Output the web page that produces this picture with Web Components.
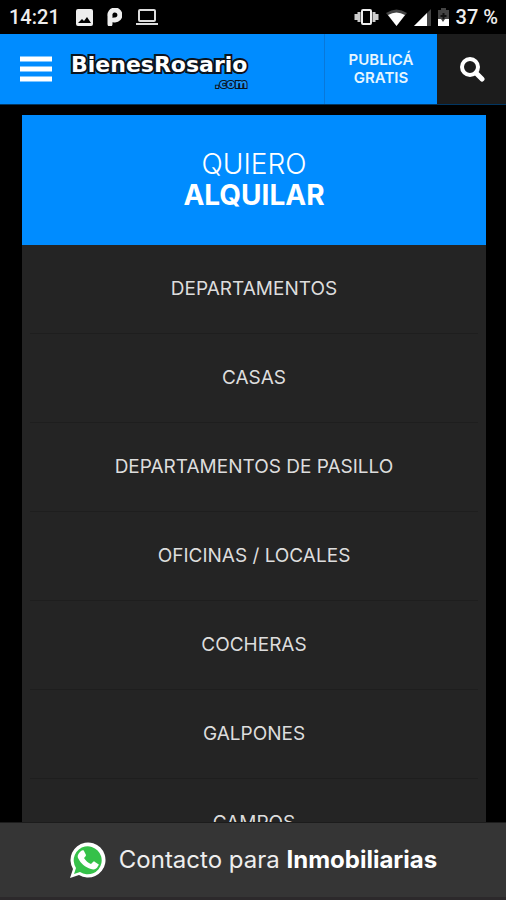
<!DOCTYPE html>
<html lang="es">
<head>
<meta charset="utf-8">
<meta name="viewport" content="width=device-width, initial-scale=1">
<title>BienesRosario.com</title>
<style>
  body {
    margin: 0;
    background: #000;
    color: #fff;
    font-family: Inter, "Liberation Sans", sans-serif;
  }
</style>
</head>
<body>
<app-shell>
  <status-bar slot="top" time="14:21" battery="37 %"></status-bar>
  <site-header slot="top">
    <site-logo slot="logo"></site-logo>
    <span slot="publish">PUBLICÁ<br>GRATIS</span>
  </site-header>
  <category-menu>
    <span slot="lead">QUIERO</span>
    <span slot="action">ALQUILAR</span>
    <category-item href="#departamentos">DEPARTAMENTOS</category-item>
    <category-item href="#casas">CASAS</category-item>
    <category-item href="#pasillo">DEPARTAMENTOS DE PASILLO</category-item>
    <category-item href="#oficinas">OFICINAS / LOCALES</category-item>
    <category-item href="#cocheras">COCHERAS</category-item>
    <category-item href="#galpones">GALPONES</category-item>
    <category-item href="#campos">CAMPOS</category-item>
  </category-menu>
  <contact-bar slot="bottom">Contacto para <b>Inmobiliarias</b></contact-bar>
</app-shell>

<script>
// Base class: clones the static template of each component into its shadow root
class BaseElement extends HTMLElement {
  constructor() {
    super();
    this.attachShadow({ mode: 'open' });
    let template = document.createElement('template');
    template.innerHTML = this.constructor.markup;
    this.shadowRoot.append(template.content.cloneNode(true));
  }
}

class AppShell extends BaseElement {}
AppShell.markup = `
  <style>
    :host {
      display: flex;
      flex-direction: column;
      height: 100vh;
    }
    main {
      flex: 1;
      min-height: 0;
      overflow-y: auto;
      scrollbar-width: none;
      padding: 10px 20px 0 22px;
    }
  </style>
  <slot name="top"></slot>
  <main><slot></slot></main>
  <slot name="bottom"></slot>
`;
customElements.define('app-shell', AppShell);

class StatusBar extends BaseElement {
  connectedCallback() {
    this.shadowRoot.querySelector('#time').textContent = this.getAttribute('time');
    this.shadowRoot.querySelector('#battery').textContent = this.getAttribute('battery');
  }
}
StatusBar.markup = `
  <style>
    :host {
      display: flex;
      align-items: center;
      height: 34px;
      padding: 0 8px 0 9px;
      background: #000;
      color: #eee;
      font: 500 20px/24px Roboto, sans-serif;
    }
    div {
      display: flex;
      align-items: center;
    }
    svg { display: block; }
    .left { gap: 14px; }
    #time { margin-right: 2px; }
    .right {
      gap: 7px;
      margin-left: auto;
    }
  </style>
  <div class="left">
    <span id="time"></span>
    <svg width="17" height="17" viewBox="0 0 17 17">
      <path fill="#eee" fill-rule="evenodd" d="M2 0h13a2 2 0 0 1 2 2v13a2 2 0 0 1-2 2H2a2 2 0 0 1-2-2V2a2 2 0 0 1 2-2zM2 14h13l-4-6-3 4-2-2z"/>
    </svg>
    <svg width="15" height="18" viewBox="0 0 15 18">
      <path d="M3 16V8a5 5 0 1 1 5 4H7" fill="none" stroke="#eee" stroke-width="5" stroke-linecap="round"/>
      <path d="M7 6v3" stroke="#000" stroke-width="2"/>
    </svg>
    <svg width="22" height="17" viewBox="0 0 22 17">
      <rect x="3" y="1" width="16" height="11" rx="1" fill="none" stroke="#ddd" stroke-width="2"/>
      <path d="M0 14h22v2H0z" fill="#ddd"/>
    </svg>
  </div>
  <div class="right">
    <svg width="25" height="18" viewBox="0 0 25 18">
      <rect x="8" y="2" width="9" height="14" rx="1" fill="none" stroke="#eee" stroke-width="2"/>
      <path d="M5 4v10M2 6v6M20 4v10M23 6v6" stroke="#ccc" stroke-width="3"/>
    </svg>
    <svg width="21" height="17" viewBox="0 0 21 17">
      <path d="M0 4Q10.500-3 21 4L10.500 17z" fill="#444"/>
      <path d="M2 6Q10.500 1 19 6L10.500 17z" fill="#fff"/>
    </svg>
    <svg width="17" height="17" viewBox="0 0 17 17">
      <path d="M0 17L17 0v17z" fill="#444"/>
      <path d="M0 17L13 4v13z" fill="#fff"/>
    </svg>
    <svg width="11" height="18" viewBox="0 0 11 18">
      <path d="M3 0h5v2h3v16H0V2h3z" fill="#444"/>
      <path d="M5.500 5v6M2.500 8h6" stroke="#111" stroke-width="2"/>
      <path d="M0 11h3l2 3 2-3h4v7H0z" fill="#fff"/>
    </svg>
    <span id="battery"></span>
  </div>
`;
customElements.define('status-bar', StatusBar);

class SiteLogo extends BaseElement {}
SiteLogo.markup = `
  <style>
    :host { display: block; }
    a {
      display: flex;
      flex-direction: column;
      align-items: flex-end;
      padding-top: 4px;
      color: #fff;
      text-decoration: none;
      font-family: "DejaVu Sans", sans-serif;
      font-weight: 700;
      -webkit-text-stroke: 4px #0a1420;
      paint-order: stroke fill;
    }
    .name { font-size: 22px; line-height: 26px; }
    .tld {
      color: #1c93f5;
      font-size: 12px;
      line-height: 12px;
      -webkit-text-stroke-width: 2px;
    }
  </style>
  <a href="#inicio"><span class="name">BienesRosario</span><span class="tld">.com</span></a>
`;
customElements.define('site-logo', SiteLogo);

class SiteHeader extends BaseElement {}
SiteHeader.markup = `
  <style>
    :host {
      display: flex;
      height: 70px;
      border-bottom: 1px solid #023661;
      background: #008cff;
    }
    button {
      display: flex;
      align-items: center;
      justify-content: center;
      padding: 0;
      border: 0;
      background: none;
    }
    .menu { width: 71px; }
    .search {
      width: 69px;
      background: #1c1c1c;
    }
    .logo {
      flex: 1;
      display: flex;
      align-items: center;
    }
    .publish {
      display: flex;
      align-items: center;
      justify-content: center;
      width: 112px;
      border-left: 1px solid #0878da;
      color: #e6f6ff;
      font-size: 15px;
      line-height: 18px;
      font-weight: 600;
      text-align: center;
      text-decoration: none;
    }
  </style>
  <button class="menu" aria-label="Menú">
    <svg width="32" height="28" viewBox="0 0 32 28">
      <path d="M2 4h28M2 14h28M2 24h28" stroke="#fff" stroke-width="5" stroke-linecap="square"/>
    </svg>
  </button>
  <div class="logo"><slot name="logo"></slot></div>
  <a class="publish" href="#publicar"><slot name="publish"></slot></a>
  <button class="search" aria-label="Buscar">
    <svg width="26" height="26" viewBox="0 0 26 26" fill="none" stroke="#fff">
      <circle cx="11" cy="11" r="8" stroke-width="4"/>
      <path d="M17 17l6 6" stroke-width="5" stroke-linecap="round"/>
    </svg>
  </button>
`;
customElements.define('site-header', SiteHeader);

class CategoryMenu extends BaseElement {}
CategoryMenu.markup = `
  <style>
    :host {
      display: block;
      background: #242424;
    }
    h1 {
      display: flex;
      flex-direction: column;
      align-items: center;
      margin: 0;
      padding: 34px 0;
      background: #008cff;
      font-size: 28px;
      line-height: 31px;
      font-weight: 300;
    }
    .action { font-weight: 700; }
    nav { padding: 0 8px; }
  </style>
  <h1>
    <slot name="lead"></slot>
    <span class="action"><slot name="action"></slot></span>
  </h1>
  <nav><slot></slot></nav>
`;
customElements.define('category-menu', CategoryMenu);

class CategoryItem extends BaseElement {
  connectedCallback() {
    this.shadowRoot.querySelector('a').href = this.getAttribute('href');
  }
}
CategoryItem.markup = `
  <style>
    :host {
      display: block;
      border-bottom: 1px solid #1e1e1e;
    }
    a {
      display: block;
      padding: 32px 0;
      color: #ddd;
      font-size: 19px;
      line-height: 24px;
      text-align: center;
      text-decoration: none;
    }
  </style>
  <a><slot></slot></a>
`;
customElements.define('category-item', CategoryItem);

class ContactBar extends BaseElement {}
ContactBar.markup = `
  <style>
    :host {
      display: block;
      border-top: 1px solid #1c1c1c;
      border-bottom: 3px solid #2c292b;
      background: #353535;
    }
    a {
      display: flex;
      align-items: center;
      justify-content: center;
      gap: 13px;
      height: 74px;
      color: #eee;
      font-size: 24px;
      line-height: 28px;
      text-decoration: none;
    }
    ::slotted(b) {
      color: #fff;
      font-weight: 700;
    }
  </style>
  <a href="#contacto">
    <svg width="37" height="38" viewBox="0 0 37 38">
      <path d="M1 37l3-9A17.500 17.500 0 1 1 10 34z" fill="#fff"/>
      <path d="M5 33l2-6A14 14 0 1 1 11 31z" fill="#35c149"/>
      <path d="M12 10c1-1 3-1 3 0l2 4c0 1-1 2-2 3 2 3 4 5 7 6l2-2c1-1 1-1 2 0l3 2c1 0 1 1 0 2-1 3-4 4-7 3-6-2-10-5-13-11-1-3 1-5 3-7z" fill="#fff"/>
    </svg>
    <span><slot></slot></span>
  </a>
`;
customElements.define('contact-bar', ContactBar);
</script>
</body>
</html>
